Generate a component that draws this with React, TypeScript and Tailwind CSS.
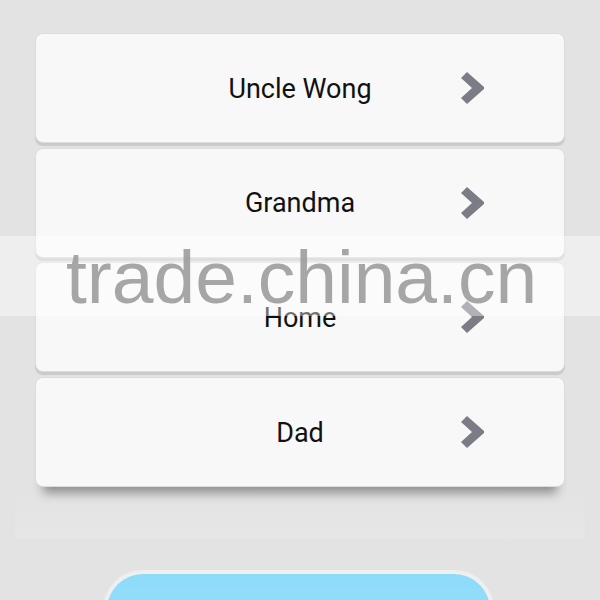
const contacts = ['Uncle Wong', 'Grandma', 'Home', 'Dad'];

function Chevron() {
  return (
    <svg width="24" height="32" viewBox="0 0 24 32" className="block">
      <polygon points="0,6 6,0 23,15 23,17 6,32 0,26 11,16" fill="#7c7c86" />
    </svg>
  );
}

function ContactRow({ name, last }: { name: string; last: boolean }) {
  return (
    <div
      className={
        'grid h-[110px] grid-cols-[1fr_auto_1fr] items-center rounded-[8px] border border-[#dcdcdc] bg-[#f8f8f8] ' +
        (last
          ? 'shadow-[0_14px_10px_-8px_rgba(0,0,0,0.38)]'
          : 'shadow-[0_3px_1px_rgba(0,0,0,0.11)]')
      }
    >
      <div />
      <span className="pt-[2px] text-[27px] leading-none text-[#111]">{name}</span>
      <div className="flex justify-end pr-[79px]">
        <Chevron />
      </div>
    </div>
  );
}

export default function App() {
  return (
    <div className="relative h-[600px] w-[600px] overflow-hidden bg-[#e3e3e4] font-['Roboto',sans-serif]">
      <div className="flex flex-col gap-[4.7px] px-[35px] pt-[33px]">
        {contacts.map((c, i) => (
          <ContactRow key={c} name={c} last={i === contacts.length - 1} />
        ))}
      </div>

      <div className="mx-[15px] mt-[2px] h-[50px] bg-gradient-to-b from-[#e3e3e4]/0 to-[#e6e6e7]" />

      <div className="mt-[31px] flex justify-center pr-[3px]">
        <div className="h-[60px] w-[391px] rounded-t-[40px] border-[4px] border-b-0 border-[#efefef] bg-gradient-to-b from-[#8ddbfa] to-[#96def9]" />
      </div>

      {/* watermark overlay */}
      <div className="absolute left-0 top-[236px] h-[80px] w-full bg-white/40">
        <span className="absolute left-[66px] top-[4px] font-['Liberation_Sans',Arial,sans-serif] text-[75px] leading-[75px] text-[#9c9c9c]/90">
          trade.china.cn
        </span>
      </div>
    </div>
  );
}
